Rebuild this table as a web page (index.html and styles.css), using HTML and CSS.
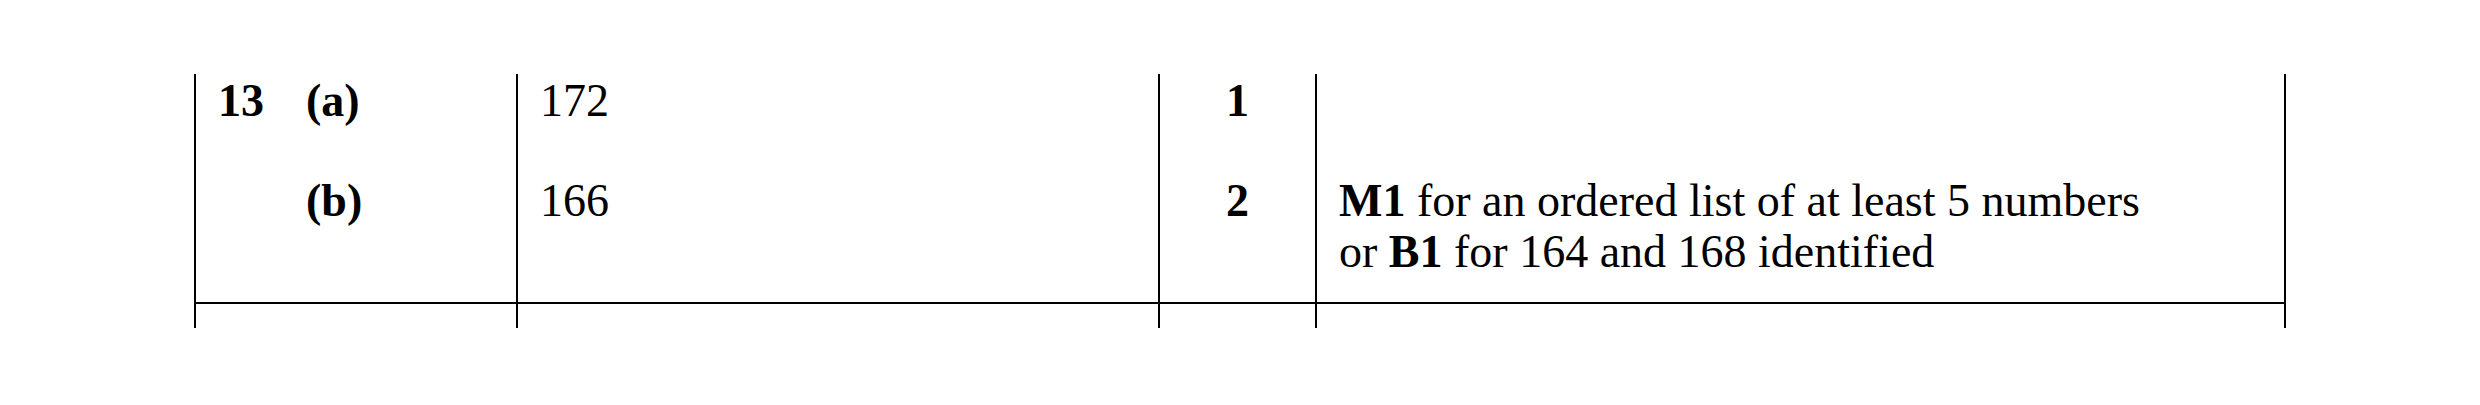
FILE: index.html
```html
<!DOCTYPE html>
<html lang="en">
<head>
<meta charset="utf-8">
<title>Mark scheme – Question 13</title>
<link rel="stylesheet" href="styles.css">
</head>
<body>
<div class="sheet">
  <div class="scheme">
    <div class="cell c1 r1"><span class="qn">13</span><span class="part">(a)</span></div>
    <div class="cell c2 r1">172</div>
    <div class="cell c3 r1"><b>1</b></div>
    <div class="cell c4 r1"></div>

    <div class="cell c1 r2"><span class="qn"></span><span class="part">(b)</span></div>
    <div class="cell c2 r2">166</div>
    <div class="cell c3 r2"><b>2</b></div>
    <div class="cell c4 r2"><b>M1</b> for an ordered list of at least 5 numbers<br>or <b>B1</b> for 164 and 168 identified</div>

    <div class="cell c1 r3"></div>
    <div class="cell c2 r3"></div>
    <div class="cell c3 r3"></div>
    <div class="cell c4 r3"></div>
  </div>
</div>
</body>
</html>
```

FILE: styles.css
```css
* {
  box-sizing: border-box;
}

html, body {
  margin: 0;
  padding: 0;
  background: #ffffff;
}

body {
  font-family: "Liberation Serif", "Times New Roman", serif;
  font-size: 46px;
  line-height: 51px;
  color: #000000;
}

.sheet {
  padding: 74px 0 0 194px;
}

.scheme {
  display: grid;
  grid-template-columns: 322px 642px 157px 971px;
  grid-template-rows: 75px 155px 24px;
}

.cell {
  border-left: 2px solid #000000;
  padding: 0 22px;
  white-space: nowrap;
}

.c3 {
  text-align: center;
}

.c4 {
  border-right: 2px solid #000000;
}

.r1 {
  padding-top: 1px;
}

.r2 {
  padding-top: 26px;
  border-bottom: 2px solid #000000;
}

.r1.c3,
.r2.c3 {
  padding-left: 0;
  padding-right: 0;
}

.qn {
  display: inline-block;
  width: 88px;
  font-weight: bold;
}

.part {
  font-weight: bold;
}

b {
  font-weight: bold;
}
```
